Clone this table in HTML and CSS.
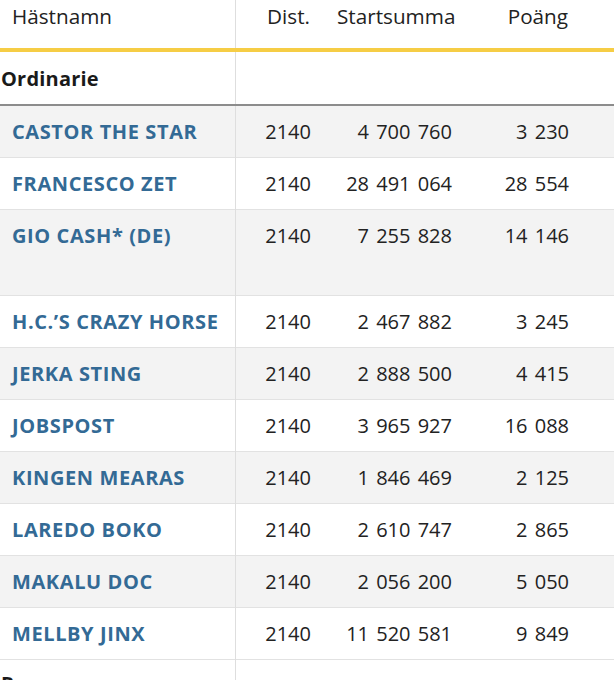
FILE: index.html
```html
<!DOCTYPE html>
<html lang="sv">
<head>
<meta charset="utf-8">
<title>Startlista</title>
<link rel="stylesheet" href="styles.css">
</head>
<body>
<table class="horses">
  <thead>
    <tr>
      <th class="c-name">Hästnamn</th>
      <th class="c-num c-dist">Dist.</th>
      <th class="c-num c-sum">Startsumma</th>
      <th class="c-num c-pts">Poäng</th>
      <th class="c-pad"></th>
    </tr>
  </thead>
  <tbody>
    <tr class="group">
      <td class="c-name">Ordinarie</td>
      <td></td><td></td><td></td><td></td>
    </tr>
    <tr class="odd"><td class="c-name"><a href="#">CASTOR THE STAR</a></td><td class="c-num c-dist">2140</td><td class="c-num c-sum">4 700 760</td><td class="c-num c-pts">3 230</td><td></td></tr>
    <tr><td class="c-name"><a href="#">FRANCESCO ZET</a></td><td class="c-num c-dist">2140</td><td class="c-num c-sum">28 491 064</td><td class="c-num c-pts">28 554</td><td></td></tr>
    <tr class="odd"><td class="c-name"><a href="#">GIO CASH* (DE)</a><div class="note"></div></td><td class="c-num c-dist">2140</td><td class="c-num c-sum">7 255 828</td><td class="c-num c-pts">14 146</td><td></td></tr>
    <tr><td class="c-name"><a href="#">H.C.’S CRAZY HORSE</a></td><td class="c-num c-dist">2140</td><td class="c-num c-sum">2 467 882</td><td class="c-num c-pts">3 245</td><td></td></tr>
    <tr class="odd"><td class="c-name"><a href="#">JERKA STING</a></td><td class="c-num c-dist">2140</td><td class="c-num c-sum">2 888 500</td><td class="c-num c-pts">4 415</td><td></td></tr>
    <tr><td class="c-name"><a href="#">JOBSPOST</a></td><td class="c-num c-dist">2140</td><td class="c-num c-sum">3 965 927</td><td class="c-num c-pts">16 088</td><td></td></tr>
    <tr class="odd"><td class="c-name"><a href="#">KINGEN MEARAS</a></td><td class="c-num c-dist">2140</td><td class="c-num c-sum">1 846 469</td><td class="c-num c-pts">2 125</td><td></td></tr>
    <tr><td class="c-name"><a href="#">LAREDO BOKO</a></td><td class="c-num c-dist">2140</td><td class="c-num c-sum">2 610 747</td><td class="c-num c-pts">2 865</td><td></td></tr>
    <tr class="odd"><td class="c-name"><a href="#">MAKALU DOC</a></td><td class="c-num c-dist">2140</td><td class="c-num c-sum">2 056 200</td><td class="c-num c-pts">5 050</td><td></td></tr>
    <tr><td class="c-name"><a href="#">MELLBY JINX</a></td><td class="c-num c-dist">2140</td><td class="c-num c-sum">11 520 581</td><td class="c-num c-pts">9 849</td><td></td></tr>
    <tr class="group reserve">
      <td class="c-name">Reserver</td>
      <td></td><td></td><td></td><td></td>
    </tr>
  </tbody>
</table>
</body>
</html>
```

FILE: styles.css
```css
html, body {
  margin: 0;
  padding: 0;
  background: #ffffff;
}

body {
  font-family: "Open Sans", "Liberation Sans", sans-serif;
  font-size: 20px;
  color: #222222;
  overflow: hidden;
}

.horses {
  border-collapse: collapse;
  table-layout: fixed;
  width: 614px;
}

.horses th,
.horses td {
  line-height: 27px;
  padding: 12px 12px 12px 12px;
  vertical-align: top;
  white-space: nowrap;
}

.horses th {
  font-weight: 400;
  font-size: 20.7px;
  color: #222222;
  padding-top: 3px;
  padding-bottom: 18px;
  border-bottom: 4px solid #f6cd45;
}

.c-name {
  width: 211px;
  text-align: left;
  border-right: 1px solid #dedede;
}

.c-dist { width: 62px; }
.c-sum { width: 117px; }
.c-pts { width: 91px; }
.c-pad { width: 10px; }

.horses td.c-dist { padding-right: 14px; }
.horses th.c-dist { padding-right: 15px; }
.horses td.c-sum { padding-right: 13px; }
.horses th.c-sum { padding-right: 11px; }
.horses td.c-pts { padding-right: 13px; }
.horses th.c-pts { padding-right: 14px; }

.c-num {
  text-align: right;
}

.horses td.c-num {
  word-spacing: 2px;
}

.horses tbody tr {
  border-bottom: 1px solid #e2e2e2;
}

.horses tbody tr.odd {
  background: #f3f3f3;
}

.horses tr.group td {
  padding-top: 13px;
  padding-bottom: 12px;
}

.horses tr.group {
  border-bottom: 2px solid #8c8c8c;
}

.horses tr.reserve td {
  padding-top: 10px;
}

.horses tr.group .c-name {
  padding-left: 1px;
  font-weight: 700;
  color: #1a1a1a;
  letter-spacing: 0.2px;
}

.horses a {
  color: #336a95;
  font-weight: 700;
  letter-spacing: 0.6px;
  text-decoration: none;
}

.note {
  height: 34px;
}
```
